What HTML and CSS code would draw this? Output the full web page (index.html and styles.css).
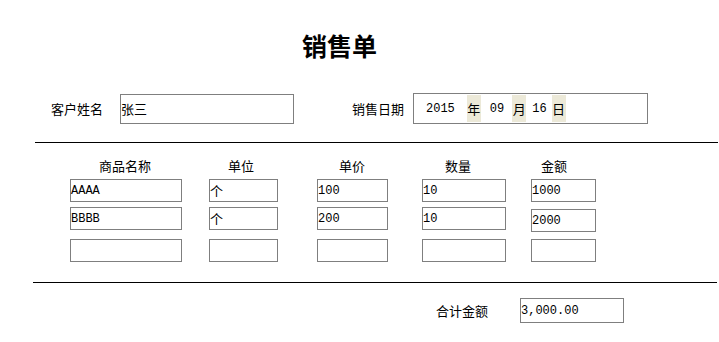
FILE: index.html
```html
<!DOCTYPE html>
<html lang="zh">
<head>
<meta charset="utf-8">
<title>销售单</title>
<link rel="stylesheet" href="styles.css">
</head>
<body>
<div class="page">
  <h1 class="title">销售单</h1>

  <div class="info-row">
    <span class="label name-label">客户姓名</span>
    <div class="field name-field"><span class="cjk">张三</span></div>
    <span class="label date-label">销售日期</span>
    <div class="field date-field">
      <span class="num n1">2015</span>
      <span class="hl h1">年</span>
      <span class="num n2">09</span>
      <span class="hl h2">月</span>
      <span class="num n3">16</span>
      <span class="hl h3">日</span>
    </div>
  </div>

  <div class="rule rule-top"></div>

  <div class="grid">
    <div class="col c1">
      <div class="head">商品名称</div>
      <div class="cell r1 mono">AAAA</div>
      <div class="cell r2 mono">BBBB</div>
      <div class="cell r3"></div>
    </div>
    <div class="col c2">
      <div class="head">单位</div>
      <div class="cell r1 cjk">个</div>
      <div class="cell r2 cjk">个</div>
      <div class="cell r3"></div>
    </div>
    <div class="col c3">
      <div class="head">单价</div>
      <div class="cell r1 mono">100</div>
      <div class="cell r2 mono">200</div>
      <div class="cell r3"></div>
    </div>
    <div class="col c4">
      <div class="head">数量</div>
      <div class="cell r1 mono">10</div>
      <div class="cell r2 mono">10</div>
      <div class="cell r3"></div>
    </div>
    <div class="col c5">
      <div class="head">金额</div>
      <div class="cell r1 mono">1000</div>
      <div class="cell r2 mono shifted">2000</div>
      <div class="cell r3"></div>
    </div>
  </div>

  <div class="rule rule-bottom"></div>

  <div class="total-row">
    <span class="label total-label">合计金额</span>
    <div class="field total-field mono">3,000.00</div>
  </div>
</div>
</body>
</html>
```

FILE: styles.css
```css
* { box-sizing: border-box; }

html, body {
  margin: 0;
  padding: 0;
  background: #ffffff;
  color: #000000;
  font-family: "Noto Sans CJK SC", "Noto Sans", sans-serif;
}

.page {
  width: 719px;
  height: 342px;
  overflow: hidden;
  padding-top: 32px;
}

.title {
  margin: 0 0 0 302px;
  font-size: 25px;
  line-height: 26px;
  height: 26px;
  font-weight: bold;
}

.label {
  font-size: 13px;
  line-height: 16px;
}

.field {
  border: 1px solid #7f7f7f;
  background: #fff;
  display: flex;
  align-items: center;
}

.cjk {
  font-family: "Noto Sans CJK SC", sans-serif;
  font-size: 13px;
  line-height: 16px;
}

.mono {
  font-family: "Liberation Mono", "DejaVu Sans Mono", monospace;
  font-size: 12px;
  line-height: 14px;
}

/* customer / date row */
.info-row {
  display: flex;
  align-items: center;
  margin-top: 35px;
  height: 31px;
}

.name-label { margin-left: 51px; width: 69px; }

.name-field {
  width: 174px;
  height: 30px;
  padding-left: 0;
}

.date-label { margin-left: 58px; width: 61px; }

.date-field {
  width: 235px;
  height: 31px;
  align-items: stretch;
  padding: 1px 0;
  padding-left: 12px;
}

.date-field .num {
  font-family: "Liberation Mono", "DejaVu Sans Mono", monospace;
  font-size: 12px;
  display: flex;
  align-items: center;
}

.date-field .hl {
  background: #ece9d8;
  width: 14px;
  font-size: 13px;
  display: flex;
  align-items: center;
  justify-content: center;
}

.h1 { margin-left: 12px; }
.n2 { margin-left: 9px; }
.h2 { margin-left: 8px; }
.n3 { margin-left: 6px; }
.h3 { margin-left: 5px; }

/* rules */
.rule {
  height: 1px;
  background: #000;
}

.rule-top {
  margin: 18px 0 0 35px;
  width: 683px;
}

.rule-bottom {
  margin: 20px 0 0 33px;
  width: 684px;
}

/* item grid */
.grid {
  display: flex;
  margin-top: 15px;
}

.col {
  display: flex;
  flex-direction: column;
}

.head {
  font-size: 13px;
  line-height: 16px;
  height: 16px;
  margin-bottom: 5px;
}

.cell {
  border: 1px solid #7f7f7f;
  height: 23px;
  display: flex;
  align-items: center;
  padding-left: 0;
}

.r2 { margin-top: 5px; }
.r3 { margin-top: 9px; }
.r2.shifted { margin-top: 7px; margin-bottom: -2px; }

.c1 { margin-left: 70px; width: 112px; }
.c2 { margin-left: 27px; width: 69px; }
.c3 { margin-left: 39px; width: 71px; }
.c4 { margin-left: 34px; width: 84px; }
.c5 { margin-left: 25px; width: 65px; }

.c1 .head { padding-left: 29px; }
.c2 .head { padding-left: 19px; }
.c3 .head { padding-left: 22px; }
.c4 .head { padding-left: 23px; }
.c5 .head { padding-left: 10px; }

/* total */
.total-row {
  display: flex;
  align-items: center;
  margin-top: 15px;
  height: 25px;
}

.total-label { margin-left: 436px; width: 84px; }

.total-field {
  width: 104px;
  height: 25px;
}
```
